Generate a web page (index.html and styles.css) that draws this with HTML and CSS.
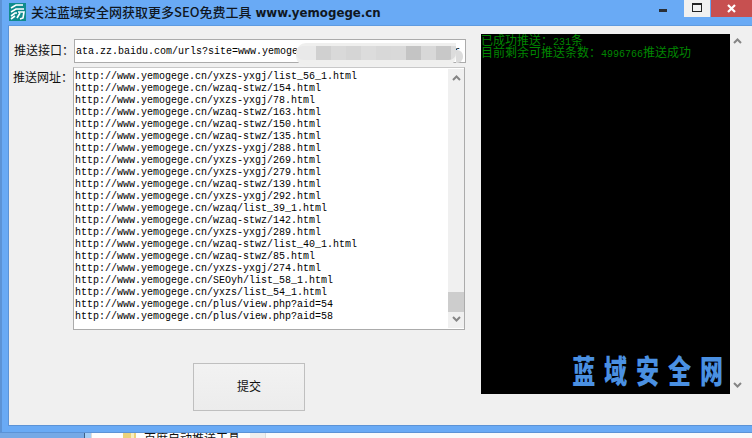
FILE: index.html
```html
<!DOCTYPE html>
<html lang="zh-CN">
<head>
<meta charset="utf-8">
<title>关注蓝域安全网获取更多SEO免费工具</title>
<link rel="stylesheet" href="styles.css">
</head>
<body>
<div class="window">
  <header class="titlebar">
    <svg class="logo" width="17" height="18" viewBox="0 0 17 18">
      <rect width="17" height="18" fill="#0f8b8d"/>
      <path d="M2 5 L7 2 L14 2 M2 9 L7 6 L15 6 M2 13 L6 10 L8 10 M9 9 L15 9 L14 15 L11 16 M11 10 L8 15 M2 16 L6 13" fill="none" stroke="#fff" stroke-width="1.6"/>
    </svg>
    <h1 class="title">关注蓝域安全网获取更多SEO免费工具 <span class="title-url">www.yemogege.cn</span></h1>
    <div class="controls">
      <div class="ctl ctl-min"><span class="min-bar"></span></div>
      <div class="ctl ctl-max"><span class="max-box"></span></div>
      <div class="ctl ctl-close">
        <svg width="9" height="9" viewBox="0 0 9 9"><path d="M1 1 L8 8 M8 1 L1 8" stroke="#fff" stroke-width="2.2"/></svg>
      </div>
    </div>
  </header>
  <main class="client">
    <section class="form">
      <div class="row row-api">
        <label class="label">推送接口：</label>
        <div class="api-input">
          <span class="api-text">ata.zz.baidu.com/urls?site=www.yemogege.cn&amp;token=xxxxxxxxxxxxxxr</span>
        </div>
        <div class="mosaic"><div class="mosaic-band"></div></div>
      </div>
      <div class="row row-urls">
        <label class="label">推送网址：</label>
        <div class="url-box">
          <div class="url-list">http://www.yemogege.cn/yxzs-yxgj/list_56_1.html
http://www.yemogege.cn/wzaq-stwz/154.html
http://www.yemogege.cn/yxzs-yxgj/78.html
http://www.yemogege.cn/wzaq-stwz/163.html
http://www.yemogege.cn/wzaq-stwz/150.html
http://www.yemogege.cn/wzaq-stwz/135.html
http://www.yemogege.cn/yxzs-yxgj/288.html
http://www.yemogege.cn/yxzs-yxgj/269.html
http://www.yemogege.cn/yxzs-yxgj/279.html
http://www.yemogege.cn/wzaq-stwz/139.html
http://www.yemogege.cn/yxzs-yxgj/292.html
http://www.yemogege.cn/wzaq/list_39_1.html
http://www.yemogege.cn/wzaq-stwz/142.html
http://www.yemogege.cn/yxzs-yxgj/289.html
http://www.yemogege.cn/wzaq-stwz/list_40_1.html
http://www.yemogege.cn/wzaq-stwz/85.html
http://www.yemogege.cn/yxzs-yxgj/274.html
http://www.yemogege.cn/SEOyh/list_58_1.html
http://www.yemogege.cn/yxzs/list_54_1.html
http://www.yemogege.cn/plus/view.php?aid=54
http://www.yemogege.cn/plus/view.php?aid=58</div>
          <div class="scrollbar">
            <svg class="chev" width="9" height="6" viewBox="0 0 9 6"><path d="M1 5 L4.5 1.5 L8 5" fill="none" stroke="#858585" stroke-width="2"/></svg>
            <div class="track"><div class="thumb"></div></div>
            <svg class="chev" width="9" height="6" viewBox="0 0 9 6"><path d="M1 1 L4.5 4.5 L8 1" fill="none" stroke="#858585" stroke-width="2"/></svg>
          </div>
        </div>
      </div>
      <button class="submit" type="button">提交</button>
    </section>
    <section class="console">
      <div class="log">
        <div class="log-line"><span class="cjk">已成功推送：</span>231<span class="cjk">条</span></div>
        <div class="log-line"><span class="cjk">目前剩余可推送条数：</span>4996766<span class="cjk">推送成功</span></div>
      </div>
      <div class="brand">蓝域安全网</div>
    </section>
    <aside class="outer-scroll">
      <svg class="chev" width="9" height="6" viewBox="0 0 9 6"><path d="M1 5 L4.5 1.5 L8 5" fill="none" stroke="#858585" stroke-width="2"/></svg>
      <svg class="chev" width="9" height="6" viewBox="0 0 9 6"><path d="M1 1 L4.5 4.5 L8 1" fill="none" stroke="#858585" stroke-width="2"/></svg>
    </aside>
  </main>
</div>
<footer class="behind">
  <div class="behind-desktop"></div>
  <div class="behind-edge"></div>
  <div class="behind-file">
    <svg class="folder" width="13" height="5" viewBox="0 0 13 5"><rect width="13" height="5" fill="#ecd27c"/><rect x="8" width="3" height="5" fill="#f8eec0"/></svg>
    <span class="file-name">百度自动推送工具</span>
  </div>
  <div class="behind-gap"></div>
  <div class="behind-rest"></div>
</footer>
</body>
</html>
```
FILE: styles.css
```css
* { box-sizing: border-box; }
html, body { margin: 0; padding: 0; }
body {
  width: 752px;
  height: 438px;
  overflow: hidden;
  background: #fff;
  font-family: "Noto Sans CJK SC", sans-serif;
  display: flex;
  flex-direction: column;
}

.window {
  height: 433px;
  flex: none;
  background: #69aaf5;
  border-left: 2px solid #5c93d6;
  border-bottom: 1px solid #5c93d6;
  display: flex;
  flex-direction: column;
}

.titlebar {
  height: 25px;
  flex: none;
  display: flex;
  align-items: flex-start;
  padding-left: 7px;
}
.logo { margin-top: 3px; flex: none; }
.title {
  margin: 4px 0 0 5px;
  font-size: 13px;
  line-height: 16px;
  font-weight: 500;
  color: #10171f;
  white-space: nowrap;
  flex: 1;
}
.title-url {
  font-family: "DejaVu Sans", sans-serif;
  font-size: 11.8px;
  font-weight: 700;
  margin-left: 1px;
}
.controls { display: flex; align-items: flex-start; height: 17px; }
.ctl { height: 17px; display: flex; align-items: center; justify-content: center; }
.ctl-min { width: 37px; }
.min-bar { width: 8px; height: 3px; background: #2a2f36; margin-top: 3px; margin-right: 5px; }
.ctl-max { width: 26px; background: #f0f0f0; margin-right: 1px; }
.max-box { width: 10px; height: 9px; border: 1px solid #222; border-top-width: 2px; margin-top: -2px; }
.ctl-close { width: 41px; background: #c75050; }

.client {
  flex: none;
  height: 401px;
  margin-left: 6px;
  background: #f0f0f0;
  border-top: 1px solid #5f9be0;
  border-left: 1px solid #5c93d6;
  border-bottom: 1px solid #5c93d6;
  display: flex;
  align-items: flex-start;
}

.form {
  width: 472px;
  flex: none;
  padding: 13px 0 0 5px;
  display: flex;
  flex-direction: column;
}
.row { display: flex; position: relative; }
.label {
  width: 60px;
  flex: none;
  font-size: 12px;
  line-height: 20px;
  color: #111;
  white-space: nowrap;
}
.row-api .label { padding-top: 1px; }
.row-urls { margin-top: 4px; margin-left: -1px; }

.api-input {
  width: 392px;
  height: 24px;
  border: 1px solid #ababab;
  background: #fff;
  overflow: hidden;
  padding: 6px 0 0 1px;
}
.api-text, .url-list, .log {
  font-family: "Liberation Mono", "Noto Sans CJK SC", monospace;
  font-size: 10px;
  line-height: 12px;
}
.api-text, .url-list { white-space: pre; }
.api-text { color: #000; display: block; }

.mosaic {
  position: absolute;
  left: 282px;
  top: 4px;
  width: 160px;
  height: 23px;
  background: #efefee;
  border-radius: 10px 0 10px 10px;
}
.mosaic::after {
  content: "";
  position: absolute;
  left: 160px;
  top: 7px;
  width: 7px;
  height: 13px;
  background: #dcdcdc;
  border-radius: 0 6px 6px 0;
}
.mosaic-band {
  height: 14px;
  border-radius: 7px 0 7px 7px;
  position: relative;
  top: 3px;
  background: linear-gradient(90deg,
    #e9e9e9 0 20px, #d0d0d0 20px 35px, #d9d9d9 35px 50px, #d5d5d5 50px 65px,
    #dcdcdc 65px 80px, #d8d8d8 80px 95px, #d9d9d9 95px 110px, #c4c4c4 110px 125px,
    #d8d8d8 125px 140px, #c8c8c8 140px 155px, #dcdcdc 155px 160px);
}

.url-box {
  width: 392px;
  height: 263px;
  background: #fff;
  border: 1px solid #ababab;
  border-top-color: #c8c8c8;
  display: flex;
}
.url-list { flex: 1; padding: 3px 0 0 1px; color: #000; overflow: hidden; }
.scrollbar {
  width: 16px;
  margin: 1px 0;
  background: #f0f0f0;
  display: flex;
  flex-direction: column;
  align-items: center;
  padding: 6px 0;
}
.track { flex: 1; width: 16px; display: flex; flex-direction: column; justify-content: flex-end; padding-bottom: 4px; }
.thumb { height: 20px; background: #cdcdcd; }
.chev { display: block; flex: none; }

.submit {
  align-self: flex-start;
  margin: 33px 0 0 179px;
  width: 112px;
  height: 48px;
  padding: 0 0 4px;
  border: 1px solid #bfbfbf;
  border-radius: 0;
  background: linear-gradient(180deg, #f2f2f2, #ececec);
  font-family: "Noto Sans CJK SC", sans-serif;
  font-size: 12px;
  color: #111;
}

.console {
  width: 249px;
  height: 360px;
  flex: none;
  margin-top: 8px;
  background: #000;
  display: flex;
  flex-direction: column;
  justify-content: space-between;
}
.log { color: #008600; }
.cjk { font-family: "Noto Sans CJK SC", sans-serif; font-size: 12px; }
.log-line { height: 12px; line-height: 12px; white-space: nowrap; }
.brand {
  font-size: 32px;
  line-height: 34px;
  font-weight: 900;
  color: #4a90e2;
  letter-spacing: 12.4px;
  white-space: nowrap;
  text-align: right;
  transform: scaleX(0.72);
  transform-origin: right center;
  margin: 0 -2px 8px 0;
}

.outer-scroll {
  width: 14px;
  height: 350px;
  margin: 12px 0 0 0;
  display: flex;
  flex-direction: column;
  justify-content: space-between;
  align-items: center;
}

.behind { height: 5px; flex: none; display: flex; overflow: hidden; }
.behind-desktop { width: 84px; background: #75a9e6; }
.behind-edge { width: 8px; background: #a4cdf5; border-left: 1px solid #3d5f86; border-right: 1px solid #dcdcdc; }
.behind-file {
  width: 158px;
  background: #fdfdfd;
  display: flex;
  align-items: flex-start;
  padding-left: 31px;
  overflow: hidden;
}
.folder { flex: none; display: block; }
.file-name {
  margin-left: 8px;
  font-size: 12px;
  line-height: 12px;
  color: #111;
  white-space: nowrap;
  margin-top: -1px;
}
.behind-gap { width: 16px; background: #eee; border-right: 1px solid #ddd; }
.behind-rest { flex: 1; background: #fafafa; }
```
